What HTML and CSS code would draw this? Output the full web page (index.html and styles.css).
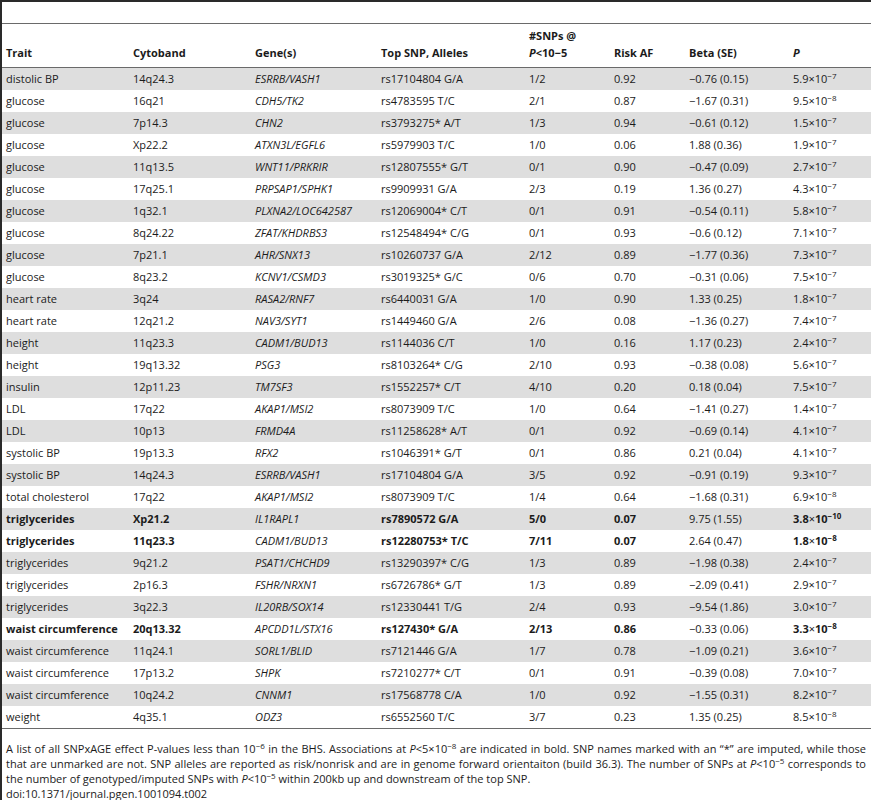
FILE: index.html
```html
<!DOCTYPE html>
<html lang="en">
<head>
    <meta charset="UTF-8">
    <meta name="viewport" content="width=device-width, initial-scale=1.0">
    <title>SNPxAGE effects</title>
    <link rel="stylesheet" href="styles.css">
</head>
<body>
    <div class="frame">
        <table class="snp-table">
            <colgroup>
                <col class="c-trait">
                <col class="c-band">
                <col class="c-gene">
                <col class="c-snp">
                <col class="c-count">
                <col class="c-af">
                <col class="c-beta">
                <col class="c-p">
            </colgroup>
            <thead>
                <tr>
                    <th>Trait</th>
                    <th>Cytoband</th>
                    <th>Gene(s)</th>
                    <th>Top SNP, Alleles</th>
                    <th>#SNPs @<br><i>P</i>&lt;10−5</th>
                    <th>Risk AF</th>
                    <th>Beta (SE)</th>
                    <th><i>P</i></th>
                </tr>
            </thead>
            <tbody>
                <tr><td>distolic BP</td><td>14q24.3</td><td class="gene">ESRRB/VASH1</td><td>rs17104804 G/A</td><td>1/2</td><td>0.92</td><td>−0.76 (0.15)</td><td>5.9×10<sup>−7</sup></td></tr>
                <tr><td>glucose</td><td>16q21</td><td class="gene">CDH5/TK2</td><td>rs4783595 T/C</td><td>2/1</td><td>0.87</td><td>−1.67 (0.31)</td><td>9.5×10<sup>−8</sup></td></tr>
                <tr><td>glucose</td><td>7p14.3</td><td class="gene">CHN2</td><td>rs3793275* A/T</td><td>1/3</td><td>0.94</td><td>−0.61 (0.12)</td><td>1.5×10<sup>−7</sup></td></tr>
                <tr><td>glucose</td><td>Xp22.2</td><td class="gene">ATXN3L/EGFL6</td><td>rs5979903 T/C</td><td>1/0</td><td>0.06</td><td>1.88 (0.36)</td><td>1.9×10<sup>−7</sup></td></tr>
                <tr><td>glucose</td><td>11q13.5</td><td class="gene">WNT11/PRKRIR</td><td>rs12807555* G/T</td><td>0/1</td><td>0.90</td><td>−0.47 (0.09)</td><td>2.7×10<sup>−7</sup></td></tr>
                <tr><td>glucose</td><td>17q25.1</td><td class="gene">PRPSAP1/SPHK1</td><td>rs9909931 G/A</td><td>2/3</td><td>0.19</td><td>1.36 (0.27)</td><td>4.3×10<sup>−7</sup></td></tr>
                <tr><td>glucose</td><td>1q32.1</td><td class="gene">PLXNA2/LOC642587</td><td>rs12069004* C/T</td><td>0/1</td><td>0.91</td><td>−0.54 (0.11)</td><td>5.8×10<sup>−7</sup></td></tr>
                <tr><td>glucose</td><td>8q24.22</td><td class="gene">ZFAT/KHDRBS3</td><td>rs12548494* C/G</td><td>0/1</td><td>0.93</td><td>−0.6 (0.12)</td><td>7.1×10<sup>−7</sup></td></tr>
                <tr><td>glucose</td><td>7p21.1</td><td class="gene">AHR/SNX13</td><td>rs10260737 G/A</td><td>2/12</td><td>0.89</td><td>−1.77 (0.36)</td><td>7.3×10<sup>−7</sup></td></tr>
                <tr><td>glucose</td><td>8q23.2</td><td class="gene">KCNV1/CSMD3</td><td>rs3019325* G/C</td><td>0/6</td><td>0.70</td><td>−0.31 (0.06)</td><td>7.5×10<sup>−7</sup></td></tr>
                <tr><td>heart rate</td><td>3q24</td><td class="gene">RASA2/RNF7</td><td>rs6440031 G/A</td><td>1/0</td><td>0.90</td><td>1.33 (0.25)</td><td>1.8×10<sup>−7</sup></td></tr>
                <tr><td>heart rate</td><td>12q21.2</td><td class="gene">NAV3/SYT1</td><td>rs1449460 G/A</td><td>2/6</td><td>0.08</td><td>−1.36 (0.27)</td><td>7.4×10<sup>−7</sup></td></tr>
                <tr><td>height</td><td>11q23.3</td><td class="gene">CADM1/BUD13</td><td>rs1144036 C/T</td><td>1/0</td><td>0.16</td><td>1.17 (0.23)</td><td>2.4×10<sup>−7</sup></td></tr>
                <tr><td>height</td><td>19q13.32</td><td class="gene">PSG3</td><td>rs8103264* C/G</td><td>2/10</td><td>0.93</td><td>−0.38 (0.08)</td><td>5.6×10<sup>−7</sup></td></tr>
                <tr><td>insulin</td><td>12p11.23</td><td class="gene">TM7SF3</td><td>rs1552257* C/T</td><td>4/10</td><td>0.20</td><td>0.18 (0.04)</td><td>7.5×10<sup>−7</sup></td></tr>
                <tr><td>LDL</td><td>17q22</td><td class="gene">AKAP1/MSI2</td><td>rs8073909 T/C</td><td>1/0</td><td>0.64</td><td>−1.41 (0.27)</td><td>1.4×10<sup>−7</sup></td></tr>
                <tr><td>LDL</td><td>10p13</td><td class="gene">FRMD4A</td><td>rs11258628* A/T</td><td>0/1</td><td>0.92</td><td>−0.69 (0.14)</td><td>4.1×10<sup>−7</sup></td></tr>
                <tr><td>systolic BP</td><td>19p13.3</td><td class="gene">RFX2</td><td>rs1046391* G/T</td><td>0/1</td><td>0.86</td><td>0.21 (0.04)</td><td>4.1×10<sup>−7</sup></td></tr>
                <tr><td>systolic BP</td><td>14q24.3</td><td class="gene">ESRRB/VASH1</td><td>rs17104804 G/A</td><td>3/5</td><td>0.92</td><td>−0.91 (0.19)</td><td>9.3×10<sup>−7</sup></td></tr>
                <tr><td>total cholesterol</td><td>17q22</td><td class="gene">AKAP1/MSI2</td><td>rs8073909 T/C</td><td>1/4</td><td>0.64</td><td>−1.68 (0.31)</td><td>6.9×10<sup>−8</sup></td></tr>
                <tr class="hit"><td>triglycerides</td><td>Xp21.2</td><td class="gene">IL1RAPL1</td><td>rs7890572 G/A</td><td>5/0</td><td>0.07</td><td class="plain">9.75 (1.55)</td><td><b>3.8</b>×<b>10<sup>−10</sup></b></td></tr>
                <tr class="hit"><td>triglycerides</td><td>11q23.3</td><td class="gene">CADM1/BUD13</td><td>rs12280753* T/C</td><td>7/11</td><td>0.07</td><td class="plain">2.64 (0.47)</td><td><b>1.8</b>×<b>10<sup>−8</sup></b></td></tr>
                <tr><td>triglycerides</td><td>9q21.2</td><td class="gene">PSAT1/CHCHD9</td><td>rs13290397* C/G</td><td>1/3</td><td>0.89</td><td>−1.98 (0.38)</td><td>2.4×10<sup>−7</sup></td></tr>
                <tr><td>triglycerides</td><td>2p16.3</td><td class="gene">FSHR/NRXN1</td><td>rs6726786* G/T</td><td>1/3</td><td>0.89</td><td>−2.09 (0.41)</td><td>2.9×10<sup>−7</sup></td></tr>
                <tr><td>triglycerides</td><td>3q22.3</td><td class="gene">IL20RB/SOX14</td><td>rs12330441 T/G</td><td>2/4</td><td>0.93</td><td>−9.54 (1.86)</td><td>3.0×10<sup>−7</sup></td></tr>
                <tr class="hit"><td>waist circumference</td><td>20q13.32</td><td class="gene">APCDD1L/STX16</td><td>rs127430* G/A</td><td>2/13</td><td>0.86</td><td class="plain">−0.33 (0.06)</td><td><b>3.3</b>×<b>10<sup>−8</sup></b></td></tr>
                <tr><td>waist circumference</td><td>11q24.1</td><td class="gene">SORL1/BLID</td><td>rs7121446 G/A</td><td>1/7</td><td>0.78</td><td>−1.09 (0.21)</td><td>3.6×10<sup>−7</sup></td></tr>
                <tr><td>waist circumference</td><td>17p13.2</td><td class="gene">SHPK</td><td>rs7210277* C/T</td><td>0/1</td><td>0.91</td><td>−0.39 (0.08)</td><td>7.0×10<sup>−7</sup></td></tr>
                <tr><td>waist circumference</td><td>10q24.2</td><td class="gene">CNNM1</td><td>rs17568778 C/A</td><td>1/0</td><td>0.92</td><td>−1.55 (0.31)</td><td>8.2×10<sup>−7</sup></td></tr>
                <tr><td>weight</td><td>4q35.1</td><td class="gene">ODZ3</td><td>rs6552560 T/C</td><td>3/7</td><td>0.23</td><td>1.35 (0.25)</td><td>8.5×10<sup>−8</sup></td></tr>
            </tbody>
        </table>

        <div class="table-notes">
            <p>A list of all SNPxAGE effect P-values less than 10<sup>−6</sup> in the BHS. Associations at <i>P</i>&lt;5×10<sup>−8</sup> are indicated in bold. SNP names marked with an “*” are imputed, while those that are unmarked are not. SNP alleles are reported as risk/nonrisk and are in genome forward orientaiton (build 36.3). The number of SNPs at <i>P</i>&lt;10<sup>−5</sup> corresponds to the number of genotyped/imputed SNPs with <i>P</i>&lt;10<sup>−5</sup> within 200kb up and downstream of the top SNP.</p>
            <p class="doi">doi:10.1371/journal.pgen.1001094.t002</p>
        </div>
    </div>
</body>
</html>
```

FILE: styles.css
```css
:root {
    --ink: #1b1b1b;
    --frame: #2a2a2a;
    --rule: #6a6a6a;
    --stripe: #dedede;
}

* {
    margin: 0;
    padding: 0;
    box-sizing: border-box;
}

body {
    background: white;
    color: var(--ink);
    font-family: 'Open Sans', 'DejaVu Sans', sans-serif;
    font-size: 11px;
}

/* Frame round the table */
.frame {
    border-top: 2px solid var(--frame);
    border-left: 2px solid var(--frame);
    padding-top: 21px;
}

.snp-table {
    width: 869px;
    table-layout: fixed;
    border-collapse: separate;
    border-spacing: 0;
    border-top: 1px solid var(--rule);
    border-bottom: 1px solid var(--rule);
}

.c-trait { width: 127px; }
.c-band { width: 122px; }
.c-gene { width: 126px; }
.c-snp { width: 148px; }
.c-count { width: 85px; }
.c-af { width: 75px; }
.c-beta { width: 104px; }
.c-p { width: 82px; }

.snp-table th {
    height: 44px;
    padding: 0 4px 6px;
    text-align: left;
    vertical-align: bottom;
    font-weight: 700;
    line-height: 17px;
    border-bottom: 1px solid var(--rule);
}

.snp-table td {
    height: 22px;
    padding: 0 4px;
    line-height: 22px;
    white-space: nowrap;
    vertical-align: middle;
}

.snp-table tbody tr:nth-child(odd) td {
    background: var(--stripe);
}

.snp-table .gene {
    font-style: italic;
}

.snp-table .hit td {
    font-weight: 700;
}

.snp-table .hit td.gene,
.snp-table .hit td.plain {
    font-weight: 400;
}

.snp-table .hit td:last-child {
    font-weight: 400;
}

sup {
    font-size: 8px;
    line-height: 0;
    vertical-align: 4px;
}

/* Footnote */
.table-notes {
    padding: 12px 5px 0 4px;
    line-height: 15px;
}

.table-notes p {
    text-align: justify;
}
```
